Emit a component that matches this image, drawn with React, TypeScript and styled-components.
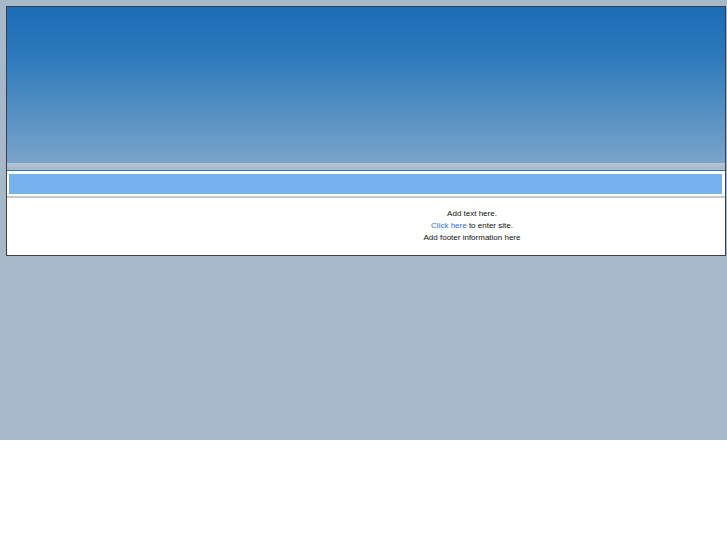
import React from 'react';
import styled, { createGlobalStyle } from 'styled-components';

const GlobalStyle = createGlobalStyle`
  html, body {
    margin: 0;
    padding: 0;
    background: #ffffff;
    font-family: 'Liberation Sans', Arial, sans-serif;
  }
`;

const Page = styled.div`
  height: 440px;
  background: #a7b8ca;
  padding: 6px 1px 0 6px;
  box-sizing: border-box;
`;

const Frame = styled.div`
  border: 1px solid #3b3f44;
  background: #ffffff;
`;

const Header = styled.div`
  height: 156px;
  background: linear-gradient(
    to bottom,
    #1b6cb6 0%,
    #2c78bb 30%,
    #4c8bc2 60%,
    #7aa5cb 100%
  );
`;

const Stripe = styled.div`
  height: 7px;
  background: linear-gradient(to bottom, #b4c5d3 0%, #a6b9ca 100%);
  border-bottom: 1px solid #3979b8;
`;

const NavBar = styled.div`
  height: 20px;
  margin: 1px 1px 0 1px;
  background: #76b2ee;
  border: 2px solid #ffffff;
  border-left-width: 1px;
`;

const Divider = styled.div`
  height: 2px;
  background: #c6c9cc;
`;

const Content = styled.div`
  display: grid;
  grid-template-columns: 212px 1fr;
  height: 57px;
  padding-top: 10px;
  box-sizing: border-box;
`;

const TextCell = styled.div`
  text-align: center;
  font-size: 8px;
  line-height: 12px;
  color: #111111;
`;

const Link = styled.a`
  color: #2a6fd4;
  text-decoration: none;
`;

const App: React.FC = () => {
  return (
    <>
      <GlobalStyle />
      <Page>
        <Frame>
          <Header />
          <Stripe />
          <NavBar />
          <Divider />
          <Content>
            <div />
            <TextCell>
              <div>Add text here.</div>
              <div>
                <Link href="#">Click here</Link> to enter site.
              </div>
              <div>Add footer information here</div>
            </TextCell>
          </Content>
        </Frame>
      </Page>
    </>
  );
};

export default App;
